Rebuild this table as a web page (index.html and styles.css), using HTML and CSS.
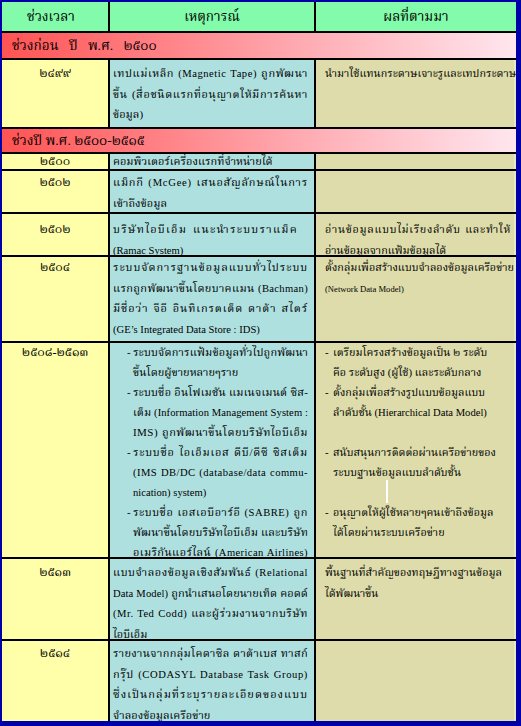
FILE: index.html
```html
<!DOCTYPE html>
<html lang="th">
<head>
<meta charset="utf-8">
<title>ประวัติระบบฐานข้อมูล</title>
<link rel="stylesheet" href="styles.css">
</head>
<body>
<div class="sheet">
  <div class="row head">
    <div class="cell c1">ช่วงเวลา</div>
    <div class="cell c2">เหตุการณ์</div>
    <div class="cell c3">ผลที่ตามมา</div>
  </div>

  <div class="row sec s1"><div class="cell span">ช่วงก่อน ปี พ.ศ. ๒๕๐๐</div></div>

  <div class="row r2488">
    <div class="cell c1"><div class="ln">๒๔๙๙</div></div>
    <div class="cell c2">
      <div class="ln j">เทปแม่เหล็ก <span class="en">(Magnetic Tape)</span> ถูกพัฒนา</div>
      <div class="ln j">ขึ้น (สื่อชนิดแรกที่อนุญาตให้มีการค้นหา</div>
      <div class="ln">ข้อมูล)</div>
    </div>
    <div class="cell c3"><div class="ln">นำมาใช้แทนกระดาษเจาะรูและเทปกระดาษ</div></div>
  </div>

  <div class="row sec s2"><div class="cell span">ช่วงปี พ.ศ. ๒๕๐๐-๒๕๑๕</div></div>

  <div class="row r2500">
    <div class="cell c1"><div class="ln">๒๕๐๐</div></div>
    <div class="cell c2"><div class="ln">คอมพิวเตอร์เครื่องแรกที่จำหน่ายได้</div></div>
    <div class="cell c3"></div>
  </div>

  <div class="row r2502a">
    <div class="cell c1"><div class="ln">๒๕๐๒</div></div>
    <div class="cell c2">
      <div class="ln j">แม็กกี <span class="en">(McGee)</span> เสนอสัญลักษณ์ในการ</div>
      <div class="ln">เข้าถึงข้อมูล</div>
    </div>
    <div class="cell c3"></div>
  </div>

  <div class="row r2502b">
    <div class="cell c1"><div class="ln">๒๕๐๒</div></div>
    <div class="cell c2">
      <div class="ln j short">บริษัทไอบีเอ็ม แนะนำระบบราแม็ค</div>
      <div class="ln"><span class="en">(Ramac System)</span></div>
    </div>
    <div class="cell c3">
      <div class="ln j">อ่านข้อมูลแบบไม่เรียงลำดับ และทำให้</div>
      <div class="ln">อ่านข้อมูลจากแฟ้มข้อมูลได้</div>
    </div>
  </div>

  <div class="row r2504">
    <div class="cell c1"><div class="ln">๒๕๐๔</div></div>
    <div class="cell c2">
      <div class="ln j">ระบบจัดการฐานข้อมูลแบบทั่วไประบบ</div>
      <div class="ln j">แรกถูกพัฒนาขึ้นโดยบาคแมน <span class="en">(Bachman)</span></div>
      <div class="ln j">มีชื่อว่า จีอี อินทิเกรตเต็ด ดาต้า สไตร์</div>
      <div class="ln"><span class="en">(GE’s Integrated Data Store : IDS)</span></div>
    </div>
    <div class="cell c3">
      <div class="ln">ตั้งกลุ่มเพื่อสร้างแบบจำลองข้อมูลเครือข่าย</div>
      <div class="ln"><span class="en sm">(Network Data Model)</span></div>
    </div>
  </div>

  <div class="row r2508">
    <div class="cell c1"><div class="ln">๒๕๐๘-๒๕๑๓</div></div>
    <div class="cell c2 list">
      <div class="item"><span class="dash">-</span><div class="txt">
        <div class="ln j">ระบบจัดการแฟ้มข้อมูลทั่วไปถูกพัฒนา</div>
        <div class="ln">ขึ้นโดยผู้ขายหลายๆราย</div>
      </div></div>
      <div class="item"><span class="dash">-</span><div class="txt">
        <div class="ln j">ระบบชื่อ อินโฟเมชัน แมเนจเมนต์ ซิส-</div>
        <div class="ln j">เต็ม <span class="en">(Information Management System :</span></div>
        <div class="ln j">IMS) ถูกพัฒนาขึ้นโดยบริษัทไอบีเอ็ม</div>
      </div></div>
      <div class="item"><span class="dash">-</span><div class="txt">
        <div class="ln j">ระบบชื่อ ไอเอ็มเอส ดีบี/ดีซี ซิสเต็ม</div>
        <div class="ln j"><span class="en">(IMS DB/DC (database/data commu-</span></div>
        <div class="ln"><span class="en">nication) system)</span></div>
      </div></div>
      <div class="item"><span class="dash">-</span><div class="txt">
        <div class="ln j">ระบบชื่อ เอสเอบีอาร์อี <span class="en">(SABRE)</span> ถูก</div>
        <div class="ln j">พัฒนาขึ้นโดยบริษัทไอบีเอ็ม และบริษัท</div>
        <div class="ln j">อเมริกันแอร์ไลน์ <span class="en">(American Airlines)</span></div>
      </div></div>
    </div>
    <div class="cell c3 list">
      <div class="item"><span class="dash">-</span><div class="txt">
        <div class="ln">เตรียมโครงสร้างข้อมูลเป็น ๒ ระดับ</div>
        <div class="ln">คือ ระดับสูง (ผู้ใช้) และระดับกลาง</div>
      </div></div>
      <div class="item"><span class="dash">-</span><div class="txt">
        <div class="ln">ตั้งกลุ่มเพื่อสร้างรูปแบบข้อมูลแบบ</div>
        <div class="ln">ลำดับชั้น <span class="en">(Hierarchical Data Model)</span></div>
      </div></div>
      <div class="ln"></div>
      <div class="item"><span class="dash">-</span><div class="txt">
        <div class="ln">สนับสนุนการติดต่อผ่านเครือข่ายของ</div>
        <div class="ln">ระบบฐานข้อมูลแบบลำดับชั้น</div>
      </div></div>
      <div class="ln"></div>
      <div class="item"><span class="dash">-</span><div class="txt">
        <div class="ln">อนุญาตให้ผู้ใช้หลายๆคนเข้าถึงข้อมูล</div>
        <div class="ln">ได้โดยผ่านระบบเครือข่าย</div>
      </div></div>
      <span class="glitch"></span>
    </div>
  </div>

  <div class="row r2513">
    <div class="cell c1"><div class="ln">๒๕๑๓</div></div>
    <div class="cell c2">
      <div class="ln j">แบบจำลองข้อมูลเชิงสัมพันธ์ <span class="en">(Relational</span></div>
      <div class="ln j"><span class="en">Data Model)</span> ถูกนำเสนอโดยนายเท็ด คอดด์</div>
      <div class="ln j"><span class="en">(Mr. Ted Codd)</span> และผู้ร่วมงานจากบริษัท</div>
      <div class="ln">ไอบีเอ็ม</div>
    </div>
    <div class="cell c3">
      <div class="ln">พื้นฐานที่สำคัญของทฤษฎีทางฐานข้อมูล</div>
      <div class="ln">ได้พัฒนาขึ้น</div>
    </div>
  </div>

  <div class="row r2514">
    <div class="cell c1"><div class="ln">๒๕๑๔</div></div>
    <div class="cell c2">
      <div class="ln j">รายงานจากกลุ่มโคดาซิล ดาต้าเบส ทาสก์</div>
      <div class="ln j">กรุ๊ป <span class="en">(CODASYL Database Task Group)</span></div>
      <div class="ln j">ซึ่งเป็นกลุ่มที่ระบุรายละเอียดของแบบ</div>
      <div class="ln">จำลองข้อมูลเครือข่าย</div>
    </div>
    <div class="cell c3"></div>
  </div>
</div>
<script src="script.js"></script>
</body>
</html>
```
FILE: styles.css
```css
html, body {
  margin: 0;
  padding: 0;
  background: #0000a8;
}

body {
  width: 521px;
  height: 726px;
  overflow: hidden;
  font-family: "Liberation Serif", "Noto Serif Thai", serif;
  font-size: 11px;
  color: #000;
}

.sheet {
  display: grid;
  grid-template-columns: 106px 204px 200px;
  grid-template-rows: 29px 25px 67px 23px 15px 41px 41px 84px 214px 80px 80px;
  gap: 2px;
  width: 514px;
  height: 719px;
  margin: 2px 5px 5px 2px;
  background: #000;
}

.row {
  display: contents;
}

.cell {
  position: relative;
  overflow: hidden;
  box-sizing: border-box;
}

.c1 {
  background: #ffffaa;
  text-align: center;
  font-size: 12.4px;
}

.c2 {
  background: #afe0e0;
  padding-left: 3px;
  padding-right: 6px;
}

.c3 {
  background: #dddcaa;
  padding-left: 9px;
  padding-right: 5px;
  font-size: 10.8px;
  box-shadow: inset -2px 0 0 #e8e8c4;
}

.ln {
  display: block;
  height: 20.5px;
  line-height: 20.5px;
  white-space: nowrap;
}

.j {
  text-align-last: justify;
}

.j.short {
  margin-right: 10px;
}

.en {
  font-size: 10.6px;
}

.en.sm {
  font-size: 8.6px;
}

/* header row */
.head .cell {
  background: #82fbaa;
  font-size: 13.5px;
  line-height: 29px;
  text-align: center;
  padding: 0;
}

.head .c1 {
  padding-right: 8px;
}

.head .c3 {
  box-shadow: none;
}

/* section rows */
.sec .span {
  grid-column: 1 / -1;
  background: linear-gradient(to right, #ff5353 0%, #ffa6ad 55%, #ffe6ee 100%);
  font-size: 13.5px;
  padding-left: 10px;
}

.s1 .span {
  line-height: 25px;
  word-spacing: 7px;
}

.s2 .span {
  line-height: 23px;
  word-spacing: 0;
}

/* per-row vertical offsets */
.r2488 .cell { padding-top: 3px; }
.r2500 .ln { height: 15px; line-height: 15px; }
.r2502a .cell { padding-top: 1px; }
.r2502b .cell { padding-top: 5px; }
.r2508 .cell { padding-top: 0; }
.r2508 .ln { height: 20px; line-height: 20px; }
.r2508 .dash { line-height: 20px; }
.r2508 .cell > :first-child { margin-top: -1px; }
.r2513 .cell { padding-top: 3px; }
.r2514 .cell { padding-top: 2px; }

/* bullet lists */
.list.c2 {
  padding-left: 17px;
}

.item {
  display: flex;
}

.dash {
  flex: none;
  width: 6px;
  line-height: 20.5px;
}

.txt {
  flex: 1;
  min-width: 0;
}

.c3 .dash {
  width: 8px;
}

.glitch {
  position: absolute;
  left: 70px;
  top: 137px;
  width: 2px;
  height: 23px;
  background: #fff;
}
```
FILE: script.js
```js
// Thai "distributed" justification: PowerPoint stretches the letters of a
// justified line as well as its spaces. Each space takes about 2.5 times a
// letter's share; text-align-last: justify puts the remainder at the spaces.
(function () {
  var seg = (typeof Intl !== "undefined" && Intl.Segmenter)
    ? new Intl.Segmenter("th", { granularity: "grapheme" })
    : null;

  function clusters(text) {
    if (seg) {
      return Array.from(seg.segment(text)).length;
    }
    return text.replace(/[\u0E31\u0E34-\u0E3A\u0E47-\u0E4E]/g, "").length;
  }

  document.querySelectorAll(".ln.j").forEach(function (el) {
    el.style.textAlignLast = "left";
    var range = document.createRange();
    range.selectNodeContents(el);
    var natural = range.getBoundingClientRect().width;
    var target = el.clientWidth;
    el.style.textAlignLast = "";
    var text = el.textContent.replace(/\s+/g, " ").trim();
    var n = clusters(text);
    if (n < 2) return;
    var spaces = (text.match(/ /g) || []).length;
    var deficit = target - natural;
    var ls = deficit > 0 ? deficit / (n + spaces * 1.5) : deficit / n;
    if (Math.abs(ls) > 0.02) {
      el.style.letterSpacing = ls.toFixed(2) + "px";
    }
  });
})();
```
